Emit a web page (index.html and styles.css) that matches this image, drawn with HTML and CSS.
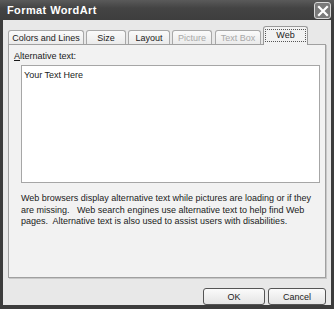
FILE: index.html
```html
<!DOCTYPE html>
<html lang="en">
<head>
    <meta charset="UTF-8">
    <title>Format WordArt</title>
    <link rel="stylesheet" href="styles.css">
</head>
<body>
    <div class="window">
        <!-- Title bar -->
        <div class="titlebar">
            <span class="title">Format WordArt</span>
            <span class="close">
                <svg width="12" height="12" viewBox="0 0 12 12">
                    <path d="M2 2 L10 10 M10 2 L2 10" stroke="#fff" stroke-width="2.2" stroke-linecap="square"/>
                </svg>
            </span>
        </div>

        <div class="dialog">
            <!-- Tabs -->
            <div class="tabs">
                <div class="tab tab-colors">Colors and Lines</div>
                <div class="tab tab-size">Size</div>
                <div class="tab tab-layout">Layout</div>
                <div class="tab tab-picture disabled">Picture</div>
                <div class="tab tab-textbox disabled">Text Box</div>
                <div class="tab tab-web active"><span class="focus">Web</span></div>
            </div>

            <!-- Tab page -->
            <div class="panel">
                <label class="field-label"><u>A</u>lternative text:</label>
                <div class="textbox">Your Text Here</div>
                <p class="help">Web browsers display alternative text while pictures are loading or if they are missing.&nbsp;&nbsp; Web search engines use alternative text to help find Web pages.&nbsp; Alternative text is also used to assist users with disabilities.</p>
            </div>

            <!-- Buttons -->
            <div class="buttons">
                <button class="btn btn-ok">OK</button>
                <button class="btn btn-cancel">Cancel</button>
            </div>
        </div>
    </div>
</body>
</html>
```

FILE: styles.css
```css
body {
    margin: 0;
    padding: 0;
    font-family: 'Liberation Sans', Arial, sans-serif;
    font-size: 9px;
    color: #1a1a1a;
}

/* Window frame */
.window {
    width: 334px;
    height: 309px;
    background: #3c3c3c;
    display: flex;
    flex-direction: column;
    box-sizing: border-box;
    padding: 0 3px 4px 3px;
}

.titlebar {
    height: 22px;
    display: flex;
    align-items: center;
    justify-content: space-between;
    background: linear-gradient(#5a5a5a, #444 40%, #3e3e3e);
    margin: 0 -3px;
    padding: 0 3px 0 7px;
}

.title {
    color: #fff;
    font-family: 'Liberation Sans', Arial, sans-serif;
    font-weight: bold;
    font-size: 11px;
    letter-spacing: 0.4px;
}

.close {
    width: 15px;
    height: 15px;
    border: 1px solid #d8d8d8;
    border-radius: 3px;
    background: #7a7a7a;
    display: flex;
    align-items: center;
    justify-content: center;
    margin-top: 1px;
}

/* Dialog body */
.dialog {
    flex: 1;
    background: #e8e8e8;
    padding: 6px 5px 0 5px;
    display: flex;
    flex-direction: column;
}

.tabs {
    display: flex;
    align-items: flex-end;
    gap: 2px;
    height: 18px;
    position: relative;
    z-index: 1;
}

.tab {
    height: 13px;
    line-height: 14px;
    border: 1px solid #a8a8a8;
    border-bottom: none;
    border-radius: 3px 3px 0 0;
    background: linear-gradient(#fafafa, #ebebeb);
    text-align: center;
    white-space: nowrap;
    color: #222;
}

.tab-colors { width: 74px; }
.tab-size { width: 38px; }
.tab-layout { width: 40px; }
.tab-picture { width: 38px; }
.tab-textbox { width: 44px; margin-left: 1px; }

.tab.disabled {
    color: #a8a8a8;
}

.tab-web {
    width: 43px;
    height: 18px;
    line-height: 16px;
    background: #f2f2f2;
    margin-bottom: -1px;
    border-color: #999;
}

.tab-web .focus {
    display: inline-block;
    border: 1px dotted #555;
    padding: 0 10px;
    line-height: 11px;
    margin-top: 2px;
}

.panel {
    height: 227px;
    background: #f2f2f2;
    border: 1px solid #a0a0a0;
    box-shadow: 1px 1px 0 #c8c8c8;
    padding: 5px 5px 0 5px;
}

.field-label {
    display: block;
    line-height: 13px;
}

.textbox {
    margin: 2px 0 0 7px;
    width: 293px;
    height: 110px;
    background: #fff;
    border: 1px solid #a6a6a6;
    padding: 3px 2px;
    line-height: 12px;
}

.help {
    margin: 10px 0 0 7px;
    line-height: 11.5px;
    width: 300px;
}

.buttons {
    display: flex;
    justify-content: flex-end;
    gap: 3px;
    margin-top: 10px;
}

.btn {
    height: 17px;
    font-family: 'Liberation Sans', Arial, sans-serif;
    font-size: 9px;
    color: #222;
    background: linear-gradient(#fbfbfb, #e4e4e4);
    border: 1px solid #555;
    border-radius: 3px;
    padding: 0;
}

.btn-ok { width: 62px; }
.btn-cancel { width: 58px; }
```
